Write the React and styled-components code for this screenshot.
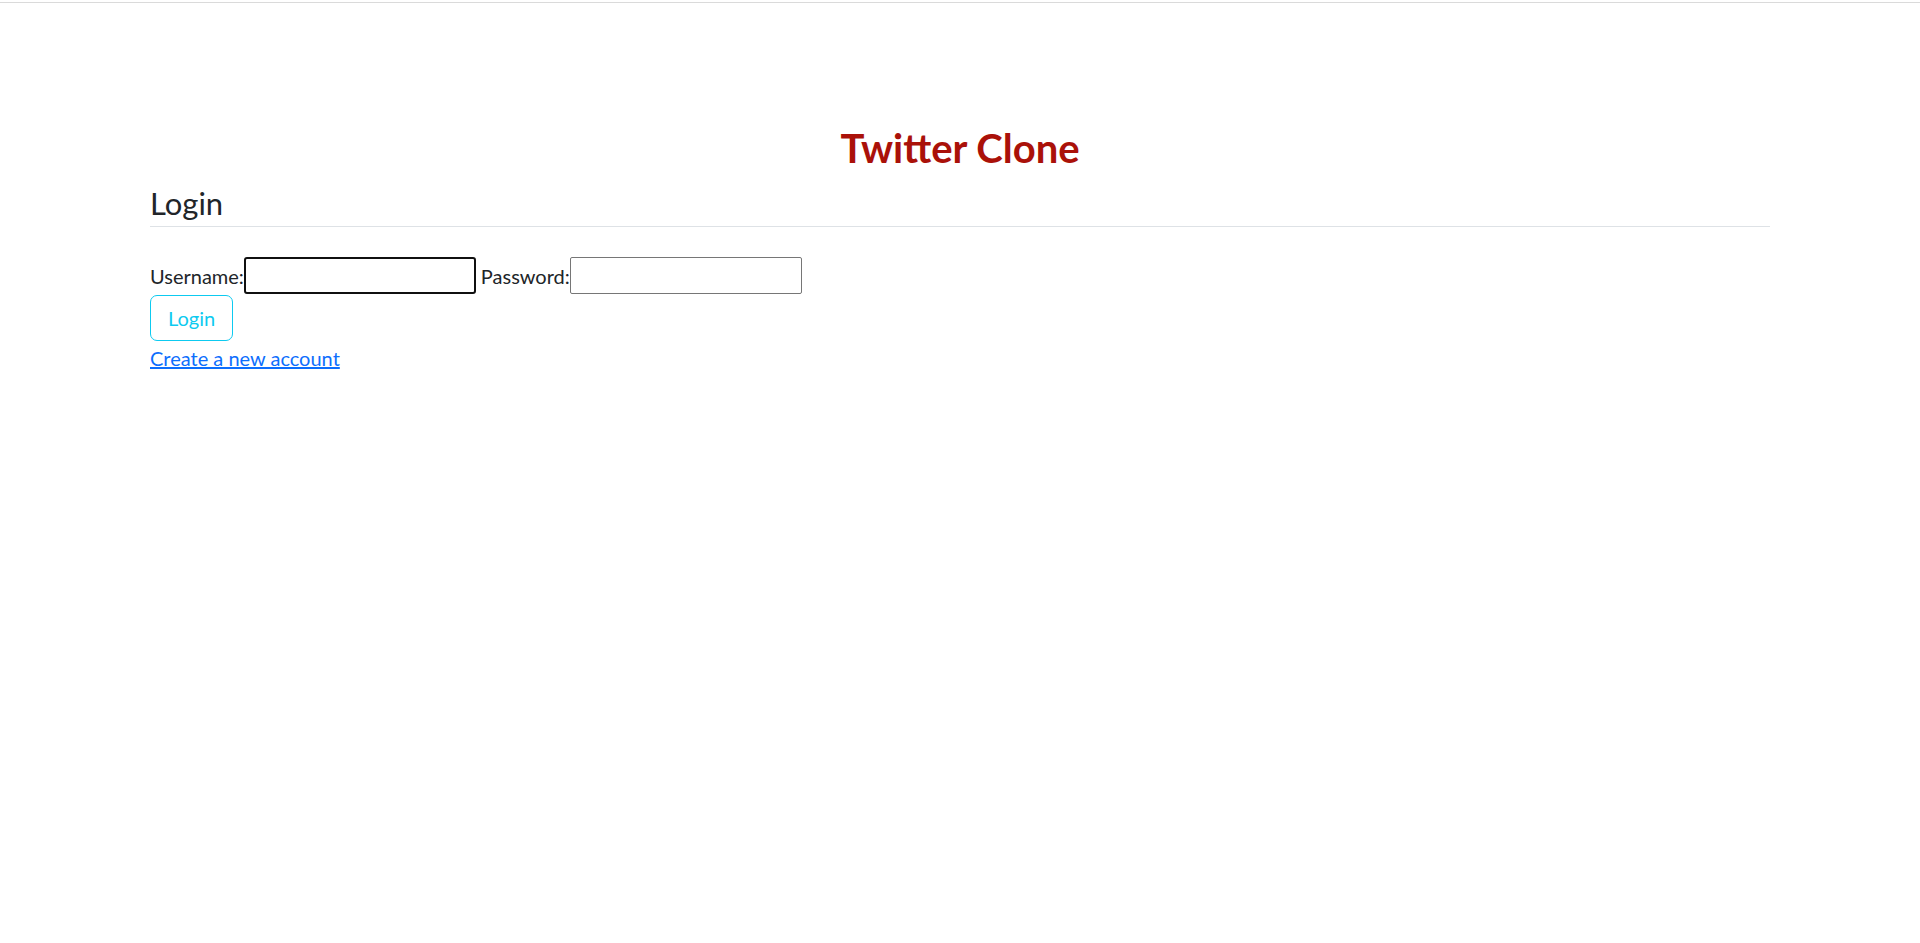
import React from "react";
import styled, { createGlobalStyle } from "styled-components";

const GlobalStyle = createGlobalStyle`
    html, body {
        margin: 0;
        padding: 0;
        background: #fff;
    }
    body {
        font-family: Lato, "Open Sans", sans-serif;
        font-size: 20px;
        line-height: 1.5;
        color: #212529;
    }
`;

const Page = styled.div`
    min-height: 943px;
    padding-top: 2px;
    box-sizing: border-box;
`;

const TopRule = styled.div`
    height: 1px;
    background: #dadada;
`;

const Container = styled.main`
    width: 1620px;
    margin: 0 auto;
`;

const Title = styled.h2`
    margin: 121px 0 0;
    text-align: center;
    font-size: 40px;
    line-height: 48px;
    font-weight: 700;
    color: #aa1109;
`;

const SectionHeading = styled.h3`
    margin: 13px 0 0;
    padding-bottom: 5px;
    font-size: 31px;
    line-height: 36px;
    font-weight: 400;
    color: #212529;
    border-bottom: 1px solid #dee2e6;
`;

const Form = styled.form`
    margin-top: 30px;
    display: flex;
    flex-direction: column;
    align-items: flex-start;
`;

const FieldRow = styled.div`
    display: flex;
    align-items: center;
`;

const Label = styled.label`
    display: flex;
    align-items: center;
    margin-right: ${({ $gap }) => $gap || 0}px;
`;

const Input = styled.input`
    width: 232px;
    height: 37px;
    box-sizing: border-box;
    padding: 1px 4px;
    font: inherit;
    font-size: 16px;
    border: ${({ $focused }) => ($focused ? "2px solid #101010" : "1px solid #767676")};
    border-radius: ${({ $focused }) => ($focused ? "3px" : "2px")};
    outline: none;
    background: #fff;
`;

const OutlineButton = styled.button`
    margin-top: 1px;
    padding: 7px 17px;
    font: inherit;
    font-size: 20px;
    line-height: 30px;
    color: #0dcaf0;
    background: transparent;
    border: 1px solid #0dcaf0;
    border-radius: 7px;
    cursor: pointer;
`;

const Link = styled.a`
    margin-top: 2px;
    color: #0d6efd;
    text-decoration: underline;
    font-size: 20px;
    line-height: 30px;
`;

export default function App() {
    return (
        <>
            <GlobalStyle />
            <Page>
                <TopRule />
                <Container>
                    <Title>Twitter Clone</Title>
                    <SectionHeading>Login</SectionHeading>
                    <Form onSubmit={(e) => e.preventDefault()}>
                        <FieldRow>
                            <Label $gap={5}>
                                Username:
                                <Input type="text" $focused />
                            </Label>
                            <Label>
                                Password:
                                <Input type="password" />
                            </Label>
                        </FieldRow>
                        <OutlineButton type="submit">Login</OutlineButton>
                        <Link href="#">Create a new account</Link>
                    </Form>
                </Container>
            </Page>
        </>
    );
}
